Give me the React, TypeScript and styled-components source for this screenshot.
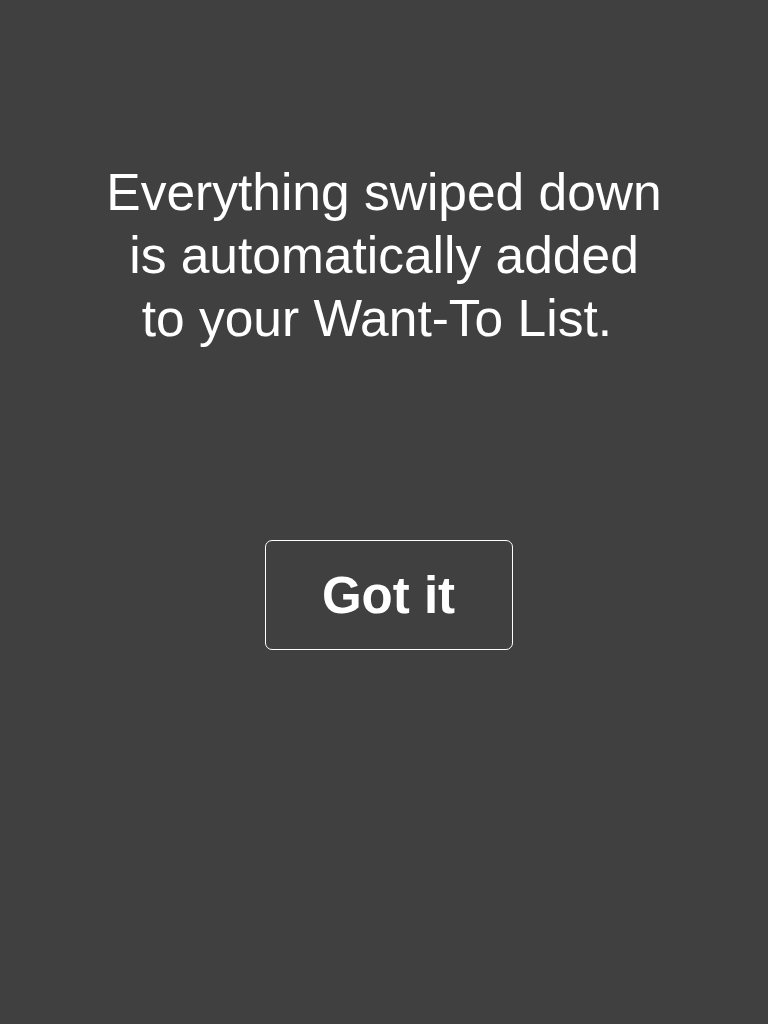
import React from "react";
import styled, { createGlobalStyle } from "styled-components";

const Global = createGlobalStyle`
  html, body { margin: 0; padding: 0; background: #404040; }
  #root { min-height: 1024px; }
`;

const Screen = styled.div`
  width: 768px;
  height: 1024px;
  background: #404040;
  display: flex;
  flex-direction: column;
  align-items: center;
  padding-top: 161px;
  box-sizing: border-box;
  font-family: "Liberation Sans", Arial, sans-serif;
  color: #ffffff;
`;

const Message = styled.p`
  margin: 0;
  font-size: 51.5px;
  line-height: 63px;
  font-weight: 400;
  text-align: center;
  white-space: pre;
`;

const GotItButton = styled.button`
  margin-top: 190px;
  margin-left: 9px;
  width: 248px;
  height: 110px;
  background: transparent;
  border: 1px solid #ffffff;
  border-radius: 7px;
  color: #ffffff;
  font-family: "Liberation Sans", Arial, sans-serif;
  font-weight: 700;
  font-size: 51px;
  display: flex;
  align-items: center;
  justify-content: center;
  padding: 0;
  cursor: pointer;
`;

export default function App() {
  return (
    <>
      <Global />
      <Screen>
        <Message>
          {"Everything swiped down\nis automatically added\nto your Want-To List. "}
        </Message>
        <GotItButton>Got it</GotItButton>
      </Screen>
    </>
  );
}
